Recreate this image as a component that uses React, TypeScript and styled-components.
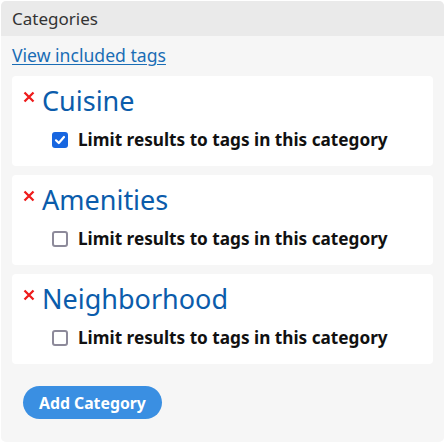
import * as React from 'react';
import styled, { createGlobalStyle } from 'styled-components';

const GlobalStyle = createGlobalStyle`
    body {
        margin: 0;
        background: #fff;
        font-family: 'Noto Sans', 'Open Sans', sans-serif;
    }
`;

const Panel = styled.section`
    margin: 1px 2px 0 1px;
    height: 441px;
    background-color: #f6f6f6;
    border-radius: 5px;
    overflow: hidden;
    display: flex;
    flex-direction: column;
`;

const PanelHeader = styled.h3`
    margin: 0;
    height: 35px;
    padding: 0 11px;
    display: flex;
    align-items: center;
    background-color: #eaeaea;
    color: #333;
    font-size: 17px;
    font-weight: 400;
`;

const PanelBody = styled.div`
    padding: 6px 11px 0 11px;
    display: flex;
    flex-direction: column;
`;

const TagsLink = styled.a`
    color: #1a6db5;
    font-size: 17.6px;
    line-height: 26px;
    text-decoration: underline;
    text-underline-offset: 2px;
    cursor: pointer;
    align-self: flex-start;
`;

const CategoryList = styled.div`
    margin-top: 8px;
    display: flex;
    flex-direction: column;
    gap: 9px;
`;

const Card = styled.div`
    background-color: #fff;
    border-radius: 4px;
    height: 90px;
    padding: 7px 11px 0 11px;
    box-sizing: border-box;
`;

const TitleRow = styled.div`
    display: flex;
    align-items: flex-start;
    gap: 7px;
`;

const RemoveButton = styled.button`
    border: none;
    background: none;
    padding: 0;
    margin-top: 8px;
    width: 12px;
    height: 12px;
    display: flex;
    cursor: pointer;
`;

const Title = styled.h2`
    margin: 0;
    color: #0b5cab;
    font-size: 27px;
    font-weight: 400;
    line-height: 36px;
`;

const LimitRow = styled.label`
    margin: 9px 0 0 29px;
    display: flex;
    align-items: center;
    gap: 10px;
    font-size: 17.2px;
    line-height: 24px;
    font-weight: 700;
    color: #111;
    cursor: pointer;
`;

const Box = styled.span<{ $checked: boolean }>`
    width: 16px;
    height: 16px;
    box-sizing: border-box;
    border-radius: 3px;
    display: flex;
    align-items: center;
    justify-content: center;
    background-color: ${p => (p.$checked ? '#1766e0' : '#fff')};
    border: ${p => (p.$checked ? 'none' : '2px solid #8d8a9a')};
`;

const AddButton = styled.button`
    margin: 22px 0 0 22px;
    align-self: flex-start;
    height: 33px;
    padding: 0 16px;
    border: none;
    border-radius: 17px;
    background-color: #3a8fe2;
    color: #fff;
    font-family: 'Noto Sans', 'Open Sans', sans-serif;
    font-size: 15.8px;
    font-weight: 700;
    cursor: pointer;
`;

interface Category {
    name: string;
    limit: boolean;
}

const initial: Category[] = [
    { name: 'Cuisine', limit: true },
    { name: 'Amenities', limit: false },
    { name: 'Neighborhood', limit: false },
];

const Cross = () => (
    <svg width="12" height="12" viewBox="0 0 12 12">
        <path d="M1.5 1.5 L10.5 10.5 M10.5 1.5 L1.5 10.5" stroke="#ee1c1c" strokeWidth="2.3" />
    </svg>
);

const Check = () => (
    <svg width="12" height="12" viewBox="0 0 12 12">
        <path d="M2 6.3 L4.8 9 L10 3" stroke="#fff" strokeWidth="2.2" fill="none" strokeLinecap="round" strokeLinejoin="round" />
    </svg>
);

export default function App() {
    const [categories, setCategories] = React.useState(initial);

    const toggle = (i: number) =>
        setCategories(cs => cs.map((c, j) => (j === i ? { ...c, limit: !c.limit } : c)));

    return (
        <>
            <GlobalStyle />
            <Panel>
                <PanelHeader>Categories</PanelHeader>
                <PanelBody>
                    <TagsLink>View included tags</TagsLink>
                    <CategoryList>
                        {categories.map((c, i) => (
                            <Card key={c.name}>
                                <TitleRow>
                                    <RemoveButton aria-label="Remove">
                                        <Cross />
                                    </RemoveButton>
                                    <Title>{c.name}</Title>
                                </TitleRow>
                                <LimitRow onClick={() => toggle(i)}>
                                    <Box $checked={c.limit}>{c.limit && <Check />}</Box>
                                    Limit results to tags in this category
                                </LimitRow>
                            </Card>
                        ))}
                    </CategoryList>
                </PanelBody>
                <AddButton>Add Category</AddButton>
            </Panel>
        </>
    );
}
